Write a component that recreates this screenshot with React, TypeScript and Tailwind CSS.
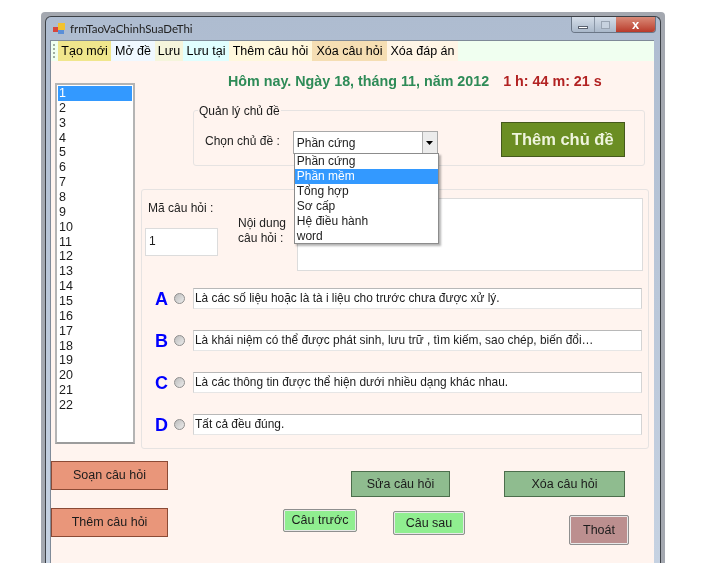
import React from 'react';

const menuItems = [
  { label: 'Tạo mới', cls: 'bg-[#f0e68c] w-[53px]' },
  { label: 'Mở đề', cls: 'bg-[#f0f8ff] w-[44px]' },
  { label: 'Lưu', cls: 'bg-[#f5f5dc] w-[28px]' },
  { label: 'Lưu tại', cls: 'bg-[#e0ffff] w-[46px]' },
  { label: 'Thêm câu hỏi', cls: 'bg-[#fff8dc] w-[83px]' },
  { label: 'Xóa câu hỏi', cls: 'bg-[#f5deb3] w-[75px]' },
  { label: 'Xóa đáp án', cls: 'bg-[#fff5e6] w-[71px]' },
];

const questions = Array.from({ length: 22 }, (_, i) => String(i + 1));
const topics = ['Phần cứng', 'Phần mềm', 'Tổng hợp', 'Sơ cấp', 'Hệ điều hành', 'word'];

const answers = [
  { key: 'A', text: 'Là các số liệu hoặc là tà i liệu cho trước chưa được xử lý.', cls: 'mt-[17px]' },
  { key: 'B', text: 'Là khái niệm có thể được phát sinh, lưu trữ , tìm kiếm, sao chép, biến đổi…', cls: 'mt-[21px]' },
  { key: 'C', text: 'Là các thông tin được thể hiện dưới nhiều dạng khác nhau.', cls: 'mt-[21px]' },
  { key: 'D', text: 'Tất cả đều đúng.', cls: 'mt-[21px]' },
];

function AnswerRow({ letter, text, className }: { letter: string; text: string; className: string }) {
  return (
    <div className={`flex items-center ${className}`}>
      <span className="ml-[10px] w-[19px] text-center text-[18px] leading-none font-bold text-[#0000ff]">{letter}</span>
      <span className="ml-[3px] w-[11px] h-[11px] rounded-full border border-[#8e8e8e] bg-gradient-to-br from-[#bdbdbd] to-[#ececec]" />
      <div className="ml-[8px] w-[449px] h-[21px] bg-white border border-[#d4d4d4] border-t-[#b8b8b8] border-b-[#e6e6e6] pl-[1px] flex items-center text-[11.9px]">
        {text}
      </div>
    </div>
  );
}

export default function App() {
  return (
    <div className="w-[718px] h-[563px] overflow-hidden bg-white pt-[12px] pl-[41px] text-[#1c1c1c] font-['Liberation_Sans',Arial,sans-serif] blur-[0.35px]">
      <div className="w-[624px] h-[551px] bg-[#a4a8b0] pt-[4px] px-[4px] rounded-t-[4px]">
        <div className="h-full rounded-t-[6px] border border-[#3c4046] border-b-0 bg-gradient-to-b from-[#aebcd0] to-[#c6d2e2] flex flex-col px-[4px]">
          <div className="h-[23px] flex items-center shrink-0">
            <svg width="13" height="13" viewBox="0 0 13 13" className="ml-[3px]">
              <rect x="0" y="5" width="5" height="5" fill="#d8463c" />
              <rect x="5" y="1" width="7" height="7" fill="#f2c230" />
              <rect x="5" y="8" width="6" height="4" fill="#5b8fd8" />
            </svg>
            <span className="ml-[4px] text-[11.5px] font-['Lato',sans-serif] text-[#222]">frmTaoVaChinhSuaDeThi</span>
            <div className="ml-auto self-start flex h-[16px] rounded-b-[4px] border border-t-0 border-[#6a7686] overflow-hidden">
              <div className="w-[23px] bg-gradient-to-b from-[#d5dee9] to-[#aab8ca] border-r border-[#8a96a6] flex items-center justify-center pt-[5px]">
                <div className="w-[10px] h-[3px] bg-white border border-[#5a6270]" />
              </div>
              <div className="w-[21px] bg-gradient-to-b from-[#d5dee9] to-[#aab8ca] flex items-center justify-center">
                <div className="w-[9px] h-[8px] border border-[#99a4b2] bg-[#c7d2df]" />
              </div>
              <div className="w-[39px] bg-gradient-to-b from-[#d98a78] to-[#b8392a] flex items-center justify-center text-white text-[13px] font-bold leading-none">
                x
              </div>
            </div>
          </div>

          <div className="w-[604px] flex-1 min-h-0 bg-[#fff4ef] border-t border-l border-[#7f8a98]">
            <div className="h-[20px] bg-[#f0fff0] flex items-stretch pl-[2px]">
              <div className="w-[5px] my-[3px] border-l-2 border-dotted border-[#a0b0a0]" />
              {menuItems.map((m) => (
                <div key={m.label} className={`${m.cls} flex items-center justify-center text-[12.5px] text-black`}>{m.label}</div>
              ))}
            </div>

            <div className="flex">
              <div className="ml-[4px] mt-[22px] w-[80px] h-[361px] bg-white border-2 border-[#b4b4b4] border-b-[#9c9c9c] p-[1px] text-[12.5px] leading-[14.86px] shrink-0">
                {questions.map((q, i) => (
                  <div key={q} className={`h-[14.86px] pl-[1px] ${i === 0 ? 'bg-[#3399ff] text-white' : ''}`}>{q}</div>
                ))}
              </div>

              <div className="ml-[6px] w-[508px] shrink-0">
                <div className="pt-[12px] pl-[87px] flex h-[30px] text-[14.3px] leading-[16px] font-bold">
                  <span className="text-[#2e8b57]">Hôm nay. Ngày 18, tháng 11, năm 2012</span>
                  <span className="ml-[14px] text-[#b22222]">1 h: 44 m: 21 s</span>
                </div>

                <div className="relative mt-[19px] ml-[52px] w-[452px] h-[56px] border border-[#e6e3e2] rounded-[3px] flex items-start">
                  <span className="absolute -top-[7px] left-[4px] px-[1px] bg-[#fff4ef] text-[12px] leading-[14px]">Quản lý chủ đề</span>
                  <span className="ml-[11px] mt-[23px] text-[12px] leading-[14px]">Chọn chủ đề :</span>
                  <div className="relative ml-[13px] mt-[20px] w-[145px] h-[23px] bg-white border border-[#a8a8a8] flex text-[12px]">
                    <span className="flex-1 pl-[3px] flex items-center">Phần cứng</span>
                    <div className="w-[15px] bg-[#ececec] border-l border-[#b0b0b0] flex items-center justify-center">
                      <svg width="7" height="4" viewBox="0 0 7 4">
                        <polygon points="0,0 7,0 3.5,4" fill="#000" />
                      </svg>
                    </div>
                    <div className="absolute top-[21px] left-0 w-[145px] h-[91px] bg-white border border-[#8c8c8c] shadow-[2px_2px_2px_rgba(0,0,0,0.3)] text-[12px] leading-[15px] z-10">
                      {topics.map((t, i) => (
                        <div key={t} className={`h-[15px] pl-[2px] ${i === 1 ? 'bg-[#3399ff] text-white' : ''}`}>{t}</div>
                      ))}
                    </div>
                  </div>
                  <button className="ml-[63px] mt-[11px] w-[124px] h-[35px] bg-[#6b8e23] border border-[#45591c] text-[#eef4dc] text-[16.5px] font-bold">
                    Thêm chủ đề
                  </button>
                </div>

                <div className="mt-[23px] w-[508px] h-[260px] border border-[#e6e3e2] rounded-[3px]">
                  <div className="flex">
                    <div className="w-[96px] shrink-0 pl-[3px]">
                      <div className="ml-[3px] mt-[11px] text-[12px] leading-[14px]">Mã câu hỏi :</div>
                      <div className="mt-[13px] w-[73px] h-[28px] bg-white border border-[#dcdcdc] text-[12px] pl-[3px] pt-[3px]">1</div>
                    </div>
                    <div className="w-[59px] shrink-0 mt-[26px] text-[12px] leading-[15px]">Nội dung<br />câu hỏi :</div>
                    <div className="mt-[8px] w-[346px] h-[73px] bg-white border border-[#dcdcdc]" />
                  </div>
                  {answers.map((a) => (
                    <AnswerRow key={a.key} letter={a.key} text={a.text} className={a.cls} />
                  ))}
                </div>
              </div>
            </div>

            <div className="flex mt-[12px] text-[12.5px]">
              <div className="w-[117px] shrink-0">
                <button className="w-[117px] h-[29px] bg-[#e9967a] border border-[#8b4a35]">Soạn câu hỏi</button>
                <button className="mt-[18px] w-[117px] h-[29px] bg-[#e9967a] border border-[#8b4a35]">Thêm câu hỏi</button>
              </div>
              <div>
                <div className="flex mt-[10px] ml-[183px]">
                  <button className="w-[99px] h-[26px] bg-[#8fbc8f] border border-[#4c6e4c]">Sửa câu hỏi</button>
                  <button className="ml-[54px] w-[121px] h-[26px] bg-[#8fbc8f] border border-[#4c6e4c]">Xóa câu hỏi</button>
                </div>
                <div className="flex items-start mt-[12px] ml-[115px]">
                  <button className="w-[74px] h-[23px] bg-[#90ee90] border border-[#8f8f8f] shadow-[inset_0_0_0_1px_#e8e8e8] rounded-[2px]">Câu trước</button>
                  <button className="mt-[2px] ml-[36px] w-[72px] h-[24px] bg-[#90ee90] border border-[#8f8f8f] shadow-[inset_0_0_0_1px_#e8e8e8] rounded-[2px]">Câu sau</button>
                  <button className="mt-[6px] ml-[104px] w-[60px] h-[30px] bg-[#bc8f8f] border border-[#8f8f8f] shadow-[inset_0_0_0_1px_#e8e8e8] rounded-[2px]">Thoát</button>
                </div>
              </div>
            </div>
          </div>
        </div>
      </div>
    </div>
  );
}
